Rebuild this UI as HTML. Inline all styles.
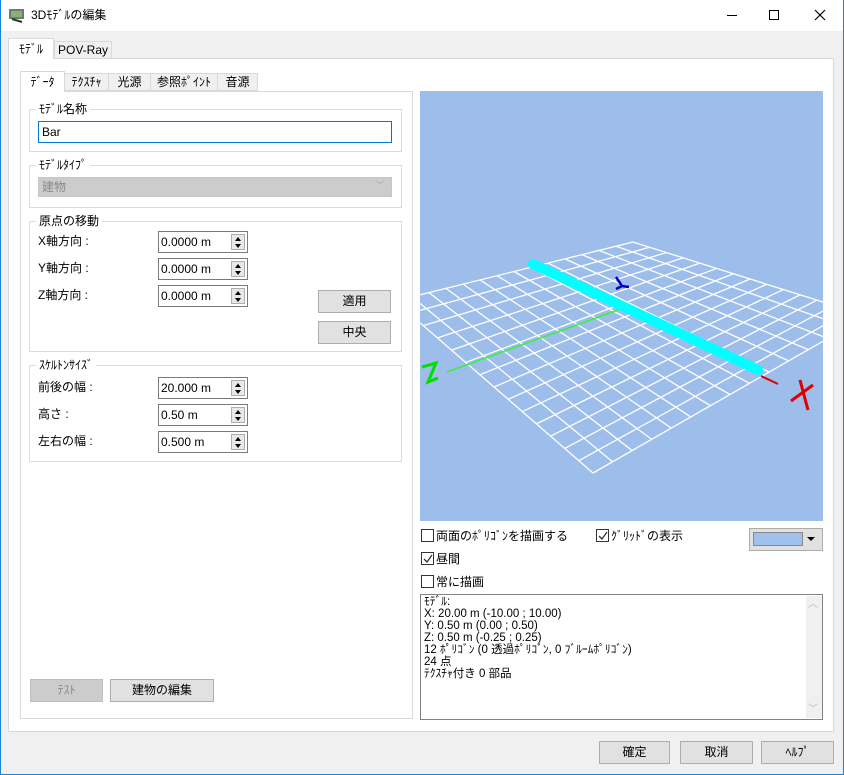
<!DOCTYPE html>
<html><head><meta charset="utf-8"><style>
*{box-sizing:border-box;margin:0;padding:0}
body{width:844px;height:775px;overflow:hidden;background:#f0f0f0;font-family:"Liberation Sans","Noto Sans CJK JP",sans-serif;font-size:12px;color:#000;position:relative}
.a{position:absolute}
.t{position:absolute;white-space:nowrap;line-height:14px}
.grp{position:absolute;border:1px solid #dcdcdc}
.grp>.lg{position:absolute;top:-8px;left:6px;background:#fff;padding:0 3px;line-height:14px}
.inp{position:absolute;background:#fff;border:1px solid #7a7a7a;height:22px;line-height:20px;padding-left:2px}
.spin{position:absolute;right:2px;top:2px;width:14px;height:16px;border:1px solid #adadad;background:#e8e8e8}
.spin:before{content:"";position:absolute;left:3px;top:2px;border:3px solid transparent;border-bottom:4px solid #000;border-top:0}
.spin:after{content:"";position:absolute;left:3px;top:9px;border:3px solid transparent;border-top:4px solid #000;border-bottom:0}
.btn{position:absolute;background:#e1e1e1;border:1px solid #adadad;text-align:center;line-height:21px;height:23px}
.cb{position:absolute;width:13px;height:13px;border:1px solid #333;background:#fff}
.tab{position:absolute;background:#f0f0f0;border:1px solid #d9d9d9;line-height:17px;text-align:center}
</style></head><body>
<div class="a" style="left:0;top:0;width:844px;height:775px;border:1px solid #1883d7;border-top:none"></div>
<div class="a" style="left:1px;top:0;width:842px;height:31px;background:#fff"></div>
<svg class="a" style="left:8px;top:7px" width="18" height="16"><rect x="1" y="2" width="15" height="10" fill="#6a7a7a"/><rect x="3" y="4" width="11" height="6" fill="#8ab070"/><path d="M4 12 L14 15" stroke="#333" stroke-width="2"/></svg>
<div class="t" style="left:31px;top:8px">3Dﾓﾃﾞﾙの編集</div>
<div class="a" style="left:727px;top:15px;width:10px;height:1px;background:#000"></div>
<div class="a" style="left:769px;top:10px;width:10px;height:10px;border:1px solid #000"></div>
<svg class="a" style="left:814px;top:9px" width="12" height="12"><path d="M1 1L11 11M11 1L1 11" stroke="#000" stroke-width="1.2"/></svg>
<div class="a" style="left:8px;top:58px;width:826px;height:674px;background:#fff;border:1px solid #d9d9d9"></div>
<div class="tab" style="left:8px;top:38px;width:46px;height:21px;background:#fff;border-bottom:none;line-height:20px">ﾓﾃﾞﾙ</div>
<div class="tab" style="left:54px;top:41px;width:58px;height:18px">POV-Ray</div>
<div class="a" style="left:20px;top:91px;width:393px;height:628px;background:#fff;border:1px solid #d9d9d9"></div>
<div class="tab" style="left:20px;top:71px;width:45px;height:21px;background:#fff;border-bottom:none;line-height:20px">ﾃﾞｰﾀ</div>
<div class="tab" style="left:64px;top:73px;width:45px;height:18px">ﾃｸｽﾁｬ</div>
<div class="tab" style="left:108px;top:73px;width:43px;height:18px">光源</div>
<div class="tab" style="left:150px;top:73px;width:68px;height:18px">参照ﾎﾟｲﾝﾄ</div>
<div class="tab" style="left:217px;top:73px;width:41px;height:18px">音源</div>
<div class="grp" style="left:29px;top:109px;width:373px;height:43px"><span class="lg">ﾓﾃﾞﾙ名称</span></div>
<div class="a" style="left:38px;top:121px;width:354px;height:22px;border:1px solid #0078d7;background:#fff;line-height:20px;padding-left:3px">Bar</div>
<div class="grp" style="left:29px;top:165px;width:373px;height:43px"><span class="lg">ﾓﾃﾞﾙﾀｲﾌﾟ</span></div>
<div class="a" style="left:38px;top:177px;width:354px;height:20px;background:#cccccc;border:1px solid #c5c5c5;color:#8a8a8a;line-height:18px;padding-left:3px">建物<span style="position:absolute;right:6px;top:0;color:#aaa;font-size:10px">﹀</span></div>
<div class="grp" style="left:29px;top:221px;width:373px;height:131px"><span class="lg">原点の移動</span></div>
<div class="t" style="left:38px;top:234px">X軸方向 :</div>
<div class="t" style="left:38px;top:261px">Y軸方向 :</div>
<div class="t" style="left:38px;top:288px">Z軸方向 :</div>
<div class="inp" style="left:158px;top:231px;width:90px">0.0000 m<span class="spin"></span></div>
<div class="inp" style="left:158px;top:258px;width:90px">0.0000 m<span class="spin"></span></div>
<div class="inp" style="left:158px;top:285px;width:90px">0.0000 m<span class="spin"></span></div>
<div class="btn" style="left:318px;top:290px;width:73px">適用</div>
<div class="btn" style="left:318px;top:321px;width:73px">中央</div>
<div class="grp" style="left:29px;top:365px;width:373px;height:97px"><span class="lg">ｽｹﾙﾄﾝｻｲｽﾞ</span></div>
<div class="t" style="left:38px;top:380px">前後の幅 :</div>
<div class="t" style="left:38px;top:407px">高さ :</div>
<div class="t" style="left:38px;top:434px">左右の幅 :</div>
<div class="inp" style="left:158px;top:377px;width:90px">20.000 m<span class="spin"></span></div>
<div class="inp" style="left:158px;top:404px;width:90px">0.50 m<span class="spin"></span></div>
<div class="inp" style="left:158px;top:431px;width:90px">0.500 m<span class="spin"></span></div>
<div class="btn" style="left:30px;top:679px;width:73px;background:#cccccc;border-color:#bfbfbf;color:#8a8a8a">ﾃｽﾄ</div>
<div class="btn" style="left:110px;top:679px;width:104px">建物の編集</div>
<svg class="a" style="left:420px;top:91px" width="403" height="430">
<rect width="403" height="430" fill="#9dbdeb"/>
<g id="grid" stroke="#fff" stroke-width="1.3" fill="none"></g>
<line x1="27" y1="281" x2="198" y2="219" stroke="#3cf03c" stroke-width="1.5"/>
<path d="M2 276 L16 272 L8 291 L18 287" stroke="#00e000" stroke-width="3" fill="none"/>
<line x1="113" y1="173" x2="338" y2="279" stroke="#00ffff" stroke-width="10" stroke-linecap="round"/>
<line x1="341" y1="285" x2="358" y2="293" stroke="#e00000" stroke-width="2"/>
<path d="M371 310 L393 294 M380 289 L388 319" stroke="#e00000" stroke-width="3" fill="none"/>
<path d="M196 186 L202 195 M202 195 L209 196 M202 195 L196 198" stroke="#0000cc" stroke-width="2.5" fill="none"/>
</svg>
<script>
(function(){var L=[395,301],B=[633,242],F=[593,473],R=[867,316],ox=420,oy=91,n=14,g=document.getElementById('grid'),s='';
function p(a,b,t){return [a[0]+(b[0]-a[0])*t-ox,a[1]+(b[1]-a[1])*t-oy]}
for(var i=0;i<=n;i++){var t=i/n;var a=p(L,B,t),b=p(F,R,t);s+='<line x1="'+a[0]+'" y1="'+a[1]+'" x2="'+b[0]+'" y2="'+b[1]+'"/>';a=p(L,F,t);b=p(B,R,t);s+='<line x1="'+a[0]+'" y1="'+a[1]+'" x2="'+b[0]+'" y2="'+b[1]+'"/>';}
g.innerHTML=s;})();
</script>
<div class="cb" style="left:421px;top:529px"></div><div class="t" style="left:436px;top:529px">両面のﾎﾟﾘｺﾞﾝを描画する</div>
<div class="cb" style="left:596px;top:529px"></div><div class="t" style="left:611px;top:529px">ｸﾞﾘｯﾄﾞの表示</div>
<svg class="a" style="left:597px;top:530px" width="12" height="12"><path d="M2 6 L5 9 L10 2" stroke="#333" stroke-width="1.3" fill="none"/></svg>
<div class="a" style="left:749px;top:528px;width:74px;height:23px;background:#e1e1e1;border:1px solid #adadad"></div>
<div class="a" style="left:753px;top:532px;width:50px;height:14px;background:#a0c0ee;border:1px solid #888"></div>
<div class="a" style="left:807px;top:537px;border:4px solid transparent;border-top:4px solid #000;border-bottom:0"></div>
<div class="cb" style="left:421px;top:552px"></div><div class="t" style="left:436px;top:552px">昼間</div>
<svg class="a" style="left:422px;top:553px" width="12" height="12"><path d="M2 6 L5 9 L10 2" stroke="#333" stroke-width="1.3" fill="none"/></svg>
<div class="cb" style="left:421px;top:575px"></div><div class="t" style="left:436px;top:575px">常に描画</div>
<div class="a" style="left:420px;top:594px;width:403px;height:126px;background:#fff;border:1px solid #828282"></div>
<div class="a" style="left:806px;top:596px;width:16px;height:122px;background:#f0f0f0"></div>
<div class="t" style="left:808px;top:598px;color:#bbb;font-size:10px">︿</div>
<div class="t" style="left:808px;top:703px;color:#bbb;font-size:10px">﹀</div>
<div class="a" style="left:424px;top:596px;font-size:11.5px;line-height:12px;white-space:pre">ﾓﾃﾞﾙ:
X: 20.00 m (-10.00 ; 10.00)
Y: 0.50 m (0.00 ; 0.50)
Z: 0.50 m (-0.25 ; 0.25)
12 ﾎﾟﾘｺﾞﾝ (0 透過ﾎﾟﾘｺﾞﾝ, 0 ﾌﾞﾙｰﾑﾎﾟﾘｺﾞﾝ)
24 点
ﾃｸｽﾁｬ付き 0 部品</div>
<div class="btn" style="left:599px;top:741px;width:71px">確定</div>
<div class="btn" style="left:680px;top:741px;width:73px">取消</div>
<div class="btn" style="left:761px;top:741px;width:73px">ﾍﾙﾌﾟ</div>
</body></html>
